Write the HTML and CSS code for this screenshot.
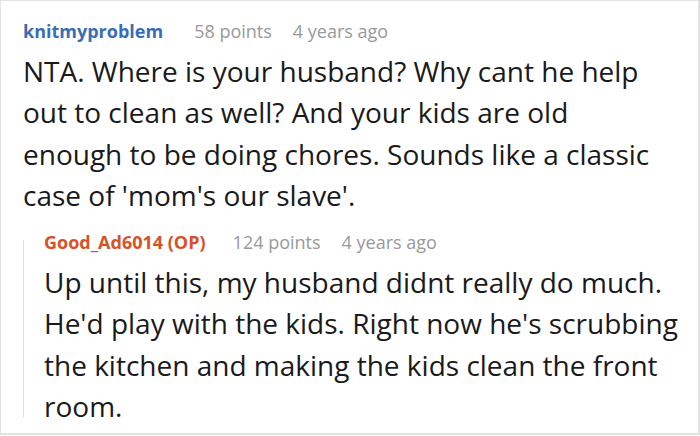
FILE: index.html
```html
<!DOCTYPE html>
<html>
<head>
<meta charset="utf-8">
<link rel="stylesheet" href="styles.css">
</head>
<body>
<div class="card">
  <div class="comment">
    <div class="meta">
      <span class="user">knitmyproblem</span>
      <span class="points">58 points</span>
      <span class="time">4 years ago</span>
    </div>
    <p class="body parent-body">NTA. Where is your husband? Why cant he help out to clean as well? And your kids are old enough to be doing chores. Sounds like a classic case of 'mom's our slave'.</p>
  </div>
  <div class="reply">
    <div class="thread-line"></div>
    <div class="reply-content">
      <div class="meta">
        <span class="user op">Good_Ad6014 (OP)</span>
        <span class="points">124 points</span>
        <span class="time">4 years ago</span>
      </div>
      <p class="body">Up until this, my husband didnt really do much. He'd play with the kids. Right now he's scrubbing the kitchen and making the kids clean the front room.</p>
    </div>
  </div>
</div>
</body>
</html>
```
FILE: styles.css
```css
html, body {
  margin: 0;
  padding: 0;
  background: #ffffff;
}
.card {
  box-sizing: border-box;
  width: 700px;
  height: 435px;
  border: 1px solid #e3e3e3;
  border-right-width: 2px;
  border-bottom-width: 2px;
  padding: 18px 12px 0 22px;
  font-family: "Open Sans", "Noto Sans", sans-serif;
  overflow: hidden;
}
.meta {
  display: flex;
  align-items: baseline;
  font-size: 18px;
  line-height: 24px;
  color: #999999;
}
.user {
  font-weight: bold;
  color: #3a6db5;
  margin-right: 31px;
}
.user.op {
  color: #d6532a;
  margin-right: 27px;
}
.points {
  margin-right: 21px;
}
.body {
  margin: 8px 0 0 0;
  font-size: 28px;
  line-height: 41.3px;
  color: #1a1a1a;
}
.parent-body {
  max-width: 645px;
}
.reply {
  display: flex;
  margin-top: 14px;
}
.thread-line {
  width: 1px;
  background: #e0e0e0;
  margin: 10px 0 9px 0;
  flex: none;
}
.reply-content {
  padding-left: 20px;
}
```
